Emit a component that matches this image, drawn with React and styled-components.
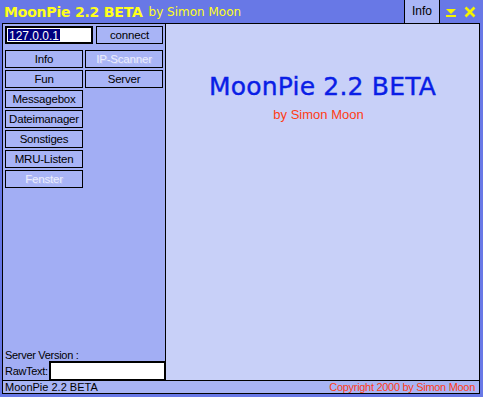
import React from 'react';
import styled, { createGlobalStyle } from 'styled-components';

const Global = createGlobalStyle`
  html, body { margin: 0; padding: 0; background: #fff; }
  body { font-family: "Liberation Sans", Arial, sans-serif; font-size: 11px; }
`

const leftButtons = [
  { label: 'Info' },
  { label: 'IP-Scanner', disabled: true },
  { label: 'Fun' },
  { label: 'Server' },
  { label: 'Messagebox' },
  null,
  { label: 'Dateimanager' },
  null,
  { label: 'Sonstiges' },
  null,
  { label: 'MRU-Listen' },
  null,
  { label: 'Fenster', disabled: true },
]

function App() {
  return (
    <>
      <Global />
      <Window>
        <TitleBar>
          <Title>MoonPie 2.2 BETA</Title>
          <Byline>by Simon Moon</Byline>
          <TitleTab>Info</TitleTab>
          <TitleIcons>
            <svg width="12" height="10" viewBox="0 0 12 10">
              <polygon points="0,1 10,1 5,6" fill="#f4f400" />
              <rect x="0" y="7" width="10" height="2" fill="#f4f400" />
            </svg>
            <svg width="12" height="12" viewBox="0 0 12 12">
              <path d="M1.5 1.5 L10.5 10.5 M10.5 1.5 L1.5 10.5" stroke="#f4f400" strokeWidth="2.6" />
            </svg>
          </TitleIcons>
        </TitleBar>

        <Body>
          <Main>
            <Side>
              <ConnectRow>
                <AddressBox><Selected>127.0.0.1</Selected></AddressBox>
                <Button>connect</Button>
              </ConnectRow>

              <ButtonGrid>
                {leftButtons.map((b, i) =>
                  b ? <Button key={i} $disabled={b.disabled}>{b.label}</Button> : <span key={i} />
                )}
              </ButtonGrid>

              <SideFooter>
                <Label>Server Version :</Label>
                <RawRow>
                  <Label>RawText:</Label>
                  <RawInput />
                </RawRow>
              </SideFooter>
            </Side>

            <Content>
              <BigTitle>MoonPie 2.2 BETA</BigTitle>
              <BigByline>by Simon Moon</BigByline>
            </Content>
          </Main>

          <StatusBar>
            <span>MoonPie 2.2 BETA</span>
            <Copyright>Copyright 2000 by Simon Moon</Copyright>
          </StatusBar>
        </Body>
      </Window>
    </>
  )
}

export default App;

const Window = styled.div`
  width: 483px;
  height: 397px;
  box-sizing: border-box;
  padding: 0 3px 3px 2px;
  background: #6878e6;
  display: flex;
  flex-direction: column;
`

const TitleBar = styled.div`
  height: 23px;
  display: flex;
  align-items: stretch;
  margin: 0 -3px 0 -2px;
  padding-left: 4px;
`

const Title = styled.div`
  font-family: "DejaVu Sans", sans-serif;
  font-weight: bold;
  font-size: 14px;
  letter-spacing: -0.2px;
  color: #ffff1a;
  line-height: 23px;
  padding-top: 1px;
`

const Byline = styled.div`
  font-family: "DejaVu Sans", sans-serif;
  font-size: 12px;
  color: #ffff1a;
  line-height: 23px;
  margin-left: 6px;
  padding-top: 1px;
  flex: 1;
`

const TitleTab = styled.div`
  width: 34px;
  border-left: 1px solid #000;
  border-right: 1px solid #000;
  background: #aab6f6;
  color: #000;
  font-size: 12px;
  line-height: 23px;
  text-align: center;
`

const TitleIcons = styled.div`
  width: 43px;
  display: flex;
  align-items: center;
  gap: 6px;
  padding-left: 6px;
  box-sizing: border-box;
  svg:first-child { margin-top: 3px; }
`

const Body = styled.div`
  flex: 1;
  border: 1px solid #000;
  display: flex;
  flex-direction: column;
  min-height: 0;
`

const Main = styled.div`
  flex: 1;
  display: flex;
  min-height: 0;
`

const Side = styled.div`
  width: 160px;
  border-right: 1px solid #000;
  background: #a2aef4;
  display: flex;
  flex-direction: column;
  padding: 2px 0 0 2px;
`

const ConnectRow = styled.div`
  display: flex;
  gap: 3px;
  height: 18px;
`

const AddressBox = styled.div`
  width: 88px;
  box-sizing: border-box;
  border: 2px solid #000;
  background: #fff;
  padding: 1px;
  display: flex;
`

const Selected = styled.span`
  background: #000080;
  color: #fff;
  font-size: 12px;
  line-height: 14px;
  padding: 0 1px;
`

const Button = styled.div`
  flex: 1;
  height: 18px;
  box-sizing: border-box;
  border: 1px solid #000;
  background: #a8b4f6;
  margin-right: 2px;
  display: flex;
  align-items: center;
  justify-content: center;
  font-size: 11.5px;
  letter-spacing: -0.2px;
  color: ${p => (p.$disabled ? '#eceeff' : '#000')};
  text-shadow: ${p => (p.$disabled ? '1px 1px 0 #bcc4f2' : 'none')};
`

const ButtonGrid = styled.div`
  margin-top: 6px;
  display: grid;
  grid-template-columns: 78px 78px;
  column-gap: 2px;
  row-gap: 2px;
  ${Button} { margin-right: 0; }
`

const SideFooter = styled.div`
  margin-top: auto;
  display: flex;
  flex-direction: column;
`

const Label = styled.div`
  font-size: 11px;
  letter-spacing: -0.3px;
  color: #000;
  line-height: 14px;
`

const RawRow = styled.div`
  display: flex;
  align-items: center;
  height: 19px;
  margin-top: -1px;
`

const RawInput = styled.div`
  flex: 1;
  height: 19px;
  box-sizing: border-box;
  border: 1px solid #000;
  border-top-width: 2px;
  border-left-width: 2px;
  background: #fff;
  margin-left: 1px;
`

const Content = styled.div`
  flex: 1;
  background: #c8d0f8;
  display: flex;
  flex-direction: column;
  align-items: center;
  padding-top: 48px;
`

const BigTitle = styled.div`
  font-family: "DejaVu Sans", sans-serif;
  font-size: 25px;
  color: #0a1ee6;
  letter-spacing: 0.2px;
  -webkit-text-stroke: 0.4px #0a1ee6;
`

const BigByline = styled.div`
  font-size: 13px;
  color: #ff3c14;
  margin-top: 6px;
  margin-right: 8px;
`

const StatusBar = styled.div`
  height: 12px;
  border-top: 1px solid #000;
  background: #a8b4f4;
  display: flex;
  justify-content: space-between;
  align-items: center;
  padding: 0 4px 0 2px;
  font-size: 11px;
  line-height: 12px;
  color: #000;
`

const Copyright = styled.span`
  color: #ff3c14;
  letter-spacing: -0.3px;
`
